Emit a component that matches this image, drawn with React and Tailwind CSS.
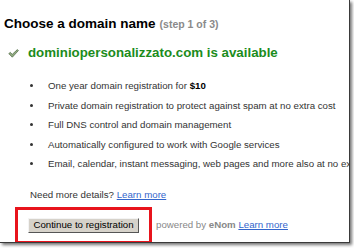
import React from 'react';

const features = [
  <>One year domain registration for <b className="text-black">$10</b></>,
  'Private domain registration to protect against spam at no extra cost',
  'Full DNS control and domain management',
  'Automatically configured to work with Google services',
  'Email, calendar, instant messaging, web pages and more also at no extra cost',
];

const CheckMark = () => (
  <svg width="11" height="9" viewBox="0 0 11 9" className="block">
    <path
      d="M0.8 4.6 L2.4 3.4 L4.2 5.4 L9.4 0.6 L10.4 1.6 L4.3 8.2 Z"
      fill="#93ad82"
      stroke="#55704a"
      strokeWidth="0.8"
      strokeLinejoin="round"
    />
  </svg>
);

export default function App() {
  return (
    <div className="w-[354px] h-[248px] bg-white overflow-hidden" style={{ fontFamily: '"Liberation Sans", Arial, sans-serif' }}>
      <div className="w-[350px] h-[243px] bg-white border-r border-b border-[#3a3a3a] shadow-[2px_2px_3px_rgba(0,0,0,0.55)] overflow-hidden">
        {/* heading */}
        <div className="pt-[15px] pl-[4px] leading-[16px] whitespace-nowrap">
          <span className="text-[13.5px] font-bold text-black">Choose a domain name</span>
          <span className="text-[10.5px] font-bold text-[#8a8a8a] ml-[4px]">(step 1 of 3)</span>
        </div>

        {/* availability */}
        <div className="mt-[13px] flex items-center pl-[8px] leading-[16px] whitespace-nowrap">
          <CheckMark />
          <span className="ml-[9px] text-[13.3px] font-bold text-[#1c8c1c]">dominiopersonalizzato.com is available</span>
        </div>

        {/* feature list */}
        <ul className="mt-[15px] text-[9.7px] leading-[19.5px] text-[#333] whitespace-nowrap">
          {features.map((f, i) => (
            <li key={i} className="flex items-center">
              <span className="ml-[30px] w-[3px] h-[3px] rounded-full bg-[#333] shrink-0" />
              <span className="ml-[15px]">{f}</span>
            </li>
          ))}
        </ul>

        <div className="mt-[15px] pl-[30px] text-[9.7px] leading-[12px] text-[#333] whitespace-nowrap">
          Need more details? <a className="text-[#3366cc] underline">Learn more</a>
        </div>

        {/* actions */}
        <div className="mt-[6px] ml-[15px] flex items-center whitespace-nowrap">
          <div className="border-[3px] border-[#e8141c] pl-[10px] pr-[10px] pt-[8px] pb-[8px]">
            <button className="w-[111px] h-[15px] bg-[#d6d2ca] border border-t-[#f4f4f4] border-l-[#f4f4f4] border-r-[#555] border-b-[#555] text-[9.7px] leading-[12px] text-black flex items-center justify-center">
              Continue to registration
            </button>
          </div>
          <span className="ml-[4px] text-[9.7px] text-[#888]">
            powered by <b>eNom</b> <a className="text-[#3366cc] underline">Learn more</a>
          </span>
        </div>
      </div>
    </div>
  );
}
